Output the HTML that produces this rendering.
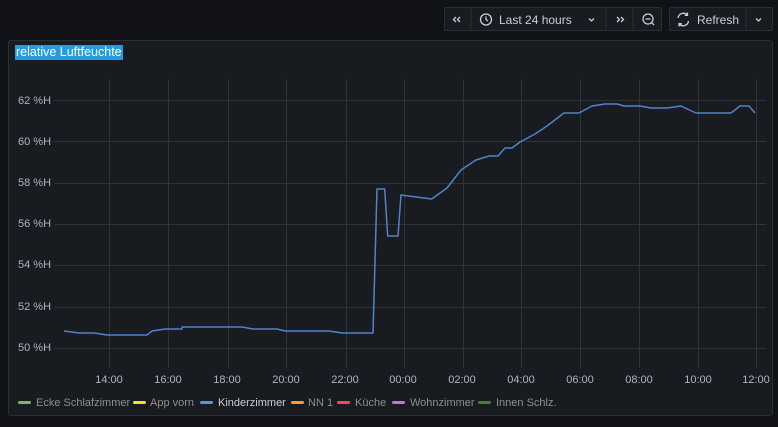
<!DOCTYPE html>
<html><head><meta charset="utf-8"><style>
body{margin:0;width:778px;height:427px;background:#111217;font-family:"Liberation Sans",sans-serif;overflow:hidden;position:relative}
.btn{position:absolute;top:7px;height:24px;background:#181b1f;border:1px solid #2b2e33;border-radius:2px;box-sizing:border-box;color:#ccccdc;font-size:12px}
.panel{position:absolute;left:8px;top:40px;width:765px;height:376px;background:#181b1f;border:1px solid #2c2f35;border-radius:3px;box-sizing:border-box}
.title{position:absolute;left:15px;top:45px;height:15px;padding:0 1px;background:#239ce2;color:#fff;font-size:12.5px;line-height:15px}
svg{position:absolute;left:0;top:0}
.leg{position:absolute;top:397px;font-size:11px;line-height:12px;color:#8e8e96;white-space:nowrap}
.d{position:absolute;top:401px;width:13px;height:3px;border-radius:2px}
</style></head><body>
<div class="btn" style="left:444px;width:218px"></div>
<div class="btn" style="left:669px;width:104px"></div>
<svg width="778" height="427">
<g stroke="#2b2e33"><line x1="471" y1="8" x2="471" y2="30"/><line x1="606" y1="8" x2="606" y2="30"/><line x1="633" y1="8" x2="633" y2="30"/><line x1="746" y1="8" x2="746" y2="30"/></g>
<g fill="none" stroke="#ccccdc" stroke-width="1.3">
<path d="M456 17l-2.5 2.5 2.5 2.5M460 17l-2.5 2.5 2.5 2.5"/>
<circle cx="486" cy="19.5" r="5.5"/><path d="M486 16.5v3l2 1.5"/>
<path d="M589 18.5l2.5 2.5 2.5-2.5"/>
<path d="M617 17l2.5 2.5-2.5 2.5M621 17l2.5 2.5-2.5 2.5"/>
<circle cx="648" cy="19" r="5"/><path d="M645.5 19h5M651.5 22.5l2.5 2.5"/>
<path d="M678 18a5.5 5.5 0 0 1 9.5-3M688.5 21a5.5 5.5 0 0 1-9.5 3M687.5 12.5v2.8h-2.8M679 26.5v-2.8h2.8"/>
<path d="M756 18.5l2.5 2.5 2.5-2.5"/>
</g>
<text x="499" y="24" fill="#ccccdc" font-size="12" font-family="Liberation Sans">Last 24 hours</text>
<text x="697" y="24" fill="#ccccdc" font-size="12" font-family="Liberation Sans">Refresh</text>
</svg>
<div class="panel"></div>
<div class="title">relative Luftfeuchte</div>
<svg width="778" height="427">
<g stroke="#2f3237" stroke-width="1">
<line x1="54" y1="100.5" x2="766" y2="100.5"/><line x1="54" y1="141.5" x2="766" y2="141.5"/><line x1="54" y1="183.5" x2="766" y2="183.5"/><line x1="54" y1="224.5" x2="766" y2="224.5"/><line x1="54" y1="265.5" x2="766" y2="265.5"/><line x1="54" y1="307.5" x2="766" y2="307.5"/><line x1="54" y1="348.5" x2="766" y2="348.5"/>
<line x1="109.5" y1="79" x2="109.5" y2="368"/><line x1="168.5" y1="79" x2="168.5" y2="368"/><line x1="228.5" y1="79" x2="228.5" y2="368"/><line x1="286.5" y1="79" x2="286.5" y2="368"/><line x1="346.5" y1="79" x2="346.5" y2="368"/><line x1="404.5" y1="79" x2="404.5" y2="368"/><line x1="463.5" y1="79" x2="463.5" y2="368"/><line x1="521.5" y1="79" x2="521.5" y2="368"/><line x1="580.5" y1="79" x2="580.5" y2="368"/><line x1="639.5" y1="79" x2="639.5" y2="368"/><line x1="698.5" y1="79" x2="698.5" y2="368"/><line x1="756.5" y1="79" x2="756.5" y2="368"/>
</g>
<g fill="#ccccdc" font-size="11" font-family="Liberation Sans" opacity="0.85">
<text x="18" y="104">62 %H</text><text x="18" y="145">60 %H</text><text x="18" y="186">58 %H</text><text x="18" y="227">56 %H</text><text x="18" y="268">54 %H</text><text x="18" y="310">52 %H</text><text x="18" y="351">50 %H</text>
<g text-anchor="middle"><text x="109" y="383">14:00</text><text x="168" y="383">16:00</text><text x="227" y="383">18:00</text><text x="286" y="383">20:00</text><text x="345" y="383">22:00</text><text x="403" y="383">00:00</text><text x="462" y="383">02:00</text><text x="521" y="383">04:00</text><text x="580" y="383">06:00</text><text x="639" y="383">08:00</text><text x="698" y="383">10:00</text><text x="756" y="383">12:00</text></g>
</g>
<polyline fill="none" stroke="#5182cc" stroke-width="1.5" stroke-linejoin="round" points="64,331 79,333 94,333 107,335 147,335 152,331 165,329 182,329 182,327 242,327 253,329 277,329 285,331 329,331 342,333 373,333 377,189 384.7,189 387.7,236 398,236 401,195 431.7,199 447,188 461,170 476,160 489,156 498,156 505,148 512,148 520,142 535,134 547,126 564,113 579,113 592,106 605,104 617,104 624,106 640,106 651,108 667,108 681,106 696,113 731,113 740,106 749,106 755,113"/>
</svg>
<div class="d" style="left:18px;background:#73bf69"></div><div class="leg" style="left:36px">Ecke Schlafzimmer</div>
<div class="d" style="left:133px;background:#fade2a"></div><div class="leg" style="left:150px">App vorn</div>
<div class="d" style="left:200px;background:#5794f2"></div><div class="leg" style="left:218px;color:#ccccdc">Kinderzimmer</div>
<div class="d" style="left:291px;background:#ff9830"></div><div class="leg" style="left:308px">NN 1</div>
<div class="d" style="left:337px;background:#f2495c"></div><div class="leg" style="left:355px">Küche</div>
<div class="d" style="left:392px;background:#b877d9"></div><div class="leg" style="left:410px">Wohnzimmer</div>
<div class="d" style="left:478px;background:#37872d"></div><div class="leg" style="left:496px">Innen Schlz.</div>
</body></html>
